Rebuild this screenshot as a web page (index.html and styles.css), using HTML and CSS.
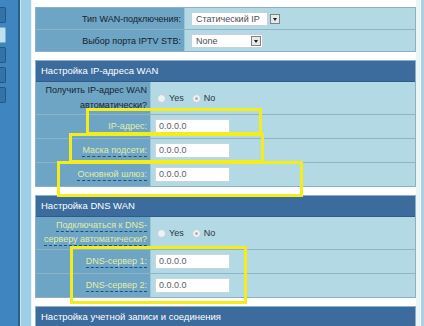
FILE: index.html
```html
<!DOCTYPE html>
<html>
<head>
<meta charset="utf-8">
<link rel="stylesheet" href="styles.css">
</head>
<body>
<div class="page">
  <div class="sidebar">
    <div class="tab"></div>
    <div class="tab on"></div>
    <div class="tab"></div>
    <div class="tab"></div>
    <div class="tab"></div>
  </div>
  <div class="rail"></div>
  <div class="main">
    <div class="section top">
      <div class="row wide r1">
        <div class="lbl">Тип WAN-подключения:</div>
        <div class="val"><span class="select s1"><span class="stext">Статический IP</span></span><span class="arrow sep"></span></div>
      </div>
      <div class="row wide r2">
        <div class="lbl">Выбор порта IPTV STB:</div>
        <div class="val"><span class="select s2"><span class="stext">None</span><span class="arrow"></span></span></div>
      </div>
    </div>

    <div class="section">
      <div class="head">Настройка IP-адреса WAN</div>
      <div class="row tall">
        <div class="lbl dark">Получить IP-адрес WAN<br>автоматически?</div>
        <div class="val"><span class="radio"></span><span class="rt">Yes</span><span class="radio checked"></span><span class="rt">No</span></div>
      </div>
      <div class="row">
        <div class="lbl"><span class="hint">IP-адрес:</span></div>
        <div class="val"><span class="input">0.0.0.0</span></div>
      </div>
      <div class="row">
        <div class="lbl"><span class="hint">Маска подсети:</span></div>
        <div class="val"><span class="input">0.0.0.0</span></div>
      </div>
      <div class="row last">
        <div class="lbl"><span class="hint">Основной шлюз:</span></div>
        <div class="val"><span class="input">0.0.0.0</span></div>
      </div>
    </div>

    <div class="section">
      <div class="head">Настройка DNS WAN</div>
      <div class="row tall">
        <div class="lbl"><span class="hint">Подключаться к DNS-</span><span class="hint">серверу автоматически?</span></div>
        <div class="val"><span class="radio"></span><span class="rt">Yes</span><span class="radio checked"></span><span class="rt">No</span></div>
      </div>
      <div class="row">
        <div class="lbl"><span class="hint">DNS-сервер 1:</span></div>
        <div class="val"><span class="input">0.0.0.0</span></div>
      </div>
      <div class="row last">
        <div class="lbl"><span class="hint">DNS-сервер 2:</span></div>
        <div class="val"><span class="input">0.0.0.0</span></div>
      </div>
    </div>

    <div class="section">
      <div class="head">Настройка учетной записи и соединения</div>
      <div class="row"><div class="lbl"></div><div class="val"></div></div>
    </div>
  </div>
  <div class="edge"></div>

  <div class="mark m1"></div>
  <div class="mark m2"></div>
  <div class="mark m3"></div>
  <div class="mark m4"></div>
</div>
</body>
</html>
```
FILE: styles.css
```css
html, body {
  margin: 0;
  padding: 0;
  background: #ffffff;
  overflow: hidden;
}
body {
  font-family: "Liberation Sans", Arial, sans-serif;
  font-size: 9px;
  color: #1c2a36;
}
.page {
  position: relative;
  display: flex;
  width: 424px;
  height: 326px;
  overflow: hidden;
}
.sidebar {
  width: 18px;
  flex: none;
  background: #3f86c1;
  display: flex;
  flex-direction: column;
  gap: 4px;
  padding-top: 7px;
  box-sizing: border-box;
}
.tab {
  width: 5px;
  height: 14px;
  background: #3473aa;
  border: 1px solid #24577f;
  border-left: none;
  border-radius: 0 2px 2px 0;
}
.tab.on {
  background: #bfe0f0;
  border-color: #7fb2cf;
}
.rail {
  width: 12px;
  flex: none;
  background: #9dcfe7;
  border-left: 2px solid #2b5e8c;
  box-shadow: inset 1px 0 0 #c8e6f4, inset -1px 0 0 #e8f4fa;
}
.main {
  width: 381px;
  flex: none;
  padding: 7px 0 0 3px;
  display: flex;
  flex-direction: column;
  gap: 8px;
}
.edge {
  flex: 1;
  background: #a6d3ea;
  border-left: 4px solid #eef3f6;
  box-shadow: inset 1px 0 0 #ffffff;
}
.section {
  border: 1px solid #8cb1c3;
  background: #b3d9e5;
}
.head {
  height: 20px;
  line-height: 20px;
  background: #3b6c9d;
  color: #ffffff;
  font-size: 9.5px;
  padding-left: 5px;
  border-bottom: 1px solid #2f5c88;
  white-space: nowrap;
}
.row {
  display: grid;
  grid-template-columns: 115px 1fr;
  height: 23px;
  border-bottom: 1px solid #8fb4c5;
}
.row.last {
  border-bottom: none;
}
.row.tall {
  height: 32px;
}
.row.wide {
  grid-template-columns: 149px 1fr;
}
.row.r1 {
  height: 21px;
}
.row.r2 {
  height: 21px;
  border-bottom: none;
}
.lbl {
  background: #6ea4c4;
  border-right: 1px solid #9cc6d8;
  text-align: right;
  padding-right: 3px;
  display: flex;
  flex-direction: column;
  justify-content: center;
  align-items: flex-end;
  line-height: 14px;
  color: #16232e;
  white-space: nowrap;
}
.lbl.dark {
  display: block;
  padding-top: 1px;
  line-height: 15px;
  color: #16232e;
}
.hint {
  color: #e3eea4;
  border-bottom: 1px dashed #1d4f85;
  line-height: 11px;
  margin: 1px 0;
}
.val {
  display: flex;
  align-items: center;
  padding-left: 4px;
}
.wide .val {
  padding-left: 6px;
}
.select {
  display: inline-flex;
  align-items: center;
  justify-content: space-between;
  height: 14px;
  background: #ffffff;
  border: 1px solid #c5d2d8;
  box-sizing: border-box;
  padding-left: 4px;
  color: #4a4f55;
  white-space: nowrap;
}
.s1 {
  width: 77px;
}
.s2 {
  width: 72px;
  padding-right: 1px;
}
.arrow {
  position: relative;
  width: 10px;
  height: 10px;
  box-sizing: border-box;
  background: #e6e9ea;
  border: 1px solid #7c8286;
}
.arrow::after {
  content: "";
  position: absolute;
  left: 2px;
  top: 3px;
  border-left: 2px solid transparent;
  border-right: 2px solid transparent;
  border-top: 3px solid #1b1b1b;
}
.arrow.sep {
  margin-left: 2px;
}
.input {
  display: inline-block;
  width: 75px;
  height: 15px;
  line-height: 13px;
  box-sizing: border-box;
  background: #ffffff;
  border: 1px solid #c9d6dc;
  padding-left: 3px;
  color: #5a6066;
}
.radio {
  width: 7px;
  height: 7px;
  border-radius: 50%;
  border: 1px solid #c3ced4;
  background: #eef2f4;
  margin-left: 2px;
  margin-right: 3px;
  position: relative;
}
.radio.checked::after {
  content: "";
  position: absolute;
  left: 2px;
  top: 2px;
  width: 3px;
  height: 3px;
  border-radius: 50%;
  background: #a9b4ba;
}
.rt {
  color: #2a3742;
  margin-right: 6px;
}
.mark {
  position: absolute;
  border: 3px solid #f3ee1b;
  box-sizing: border-box;
}
.m1 { left: 86px; top: 108px; width: 176px; height: 27px; }
.m2 { left: 69px; top: 133px; width: 195px; height: 30px; }
.m3 { left: 57px; top: 161px; width: 246px; height: 36px; }
.m4 { left: 70px; top: 246px; width: 177px; height: 58px; }
```
